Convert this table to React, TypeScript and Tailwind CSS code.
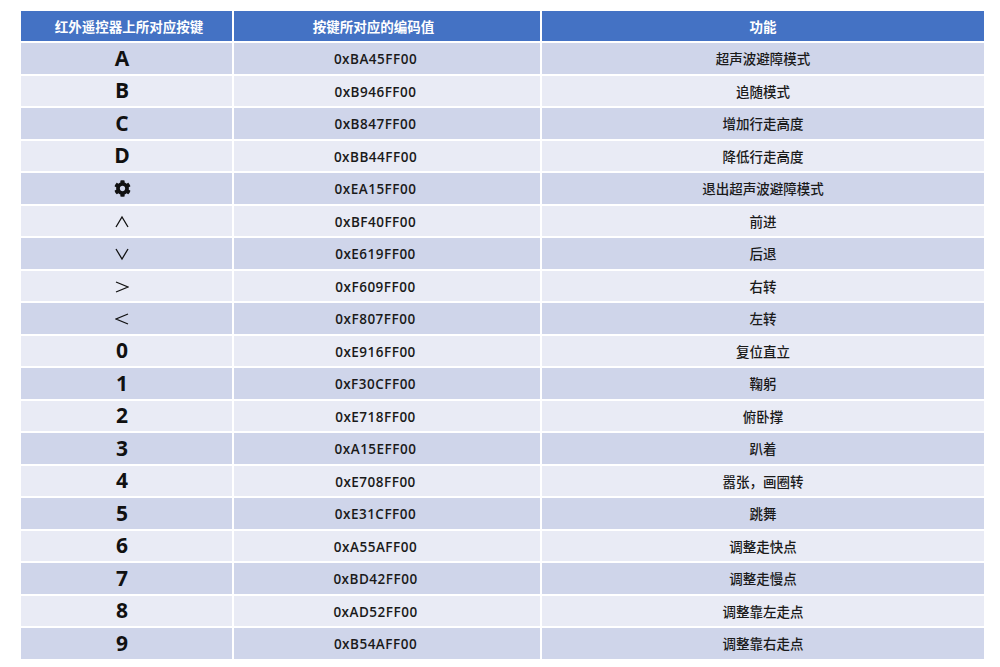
import { FaCog } from "react-icons/fa"

type Row = { key: string; code: string; fn: string }

const rows: Row[] = [
  { key: "A", code: "0xBA45FF00", fn: "超声波避障模式" },
  { key: "B", code: "0xB946FF00", fn: "追随模式" },
  { key: "C", code: "0xB847FF00", fn: "增加行走高度" },
  { key: "D", code: "0xBB44FF00", fn: "降低行走高度" },
  { key: "gear", code: "0xEA15FF00", fn: "退出超声波避障模式" },
  { key: "up", code: "0xBF40FF00", fn: "前进" },
  { key: "down", code: "0xE619FF00", fn: "后退" },
  { key: "right", code: "0xF609FF00", fn: "右转" },
  { key: "left", code: "0xF807FF00", fn: "左转" },
  { key: "0", code: "0xE916FF00", fn: "复位直立" },
  { key: "1", code: "0xF30CFF00", fn: "鞠躬" },
  { key: "2", code: "0xE718FF00", fn: "俯卧撑" },
  { key: "3", code: "0xA15EFF00", fn: "趴着" },
  { key: "4", code: "0xE708FF00", fn: "嚣张，画圈转" },
  { key: "5", code: "0xE31CFF00", fn: "跳舞" },
  { key: "6", code: "0xA55AFF00", fn: "调整走快点" },
  { key: "7", code: "0xBD42FF00", fn: "调整走慢点" },
  { key: "8", code: "0xAD52FF00", fn: "调整靠左走点" },
  { key: "9", code: "0xB54AFF00", fn: "调整靠右走点" },
]

const arrowPaths: Record<string, string> = {
  up: "M1 12 L7 2 L13 12",
  down: "M1 2 L7 12 L13 2",
  right: "M1 2 L13 7 L1 12",
  left: "M13 2 L1 7 L13 12",
}

const KeyCell = ({ k }: { k: string }) => {
  if (k === "gear") return <FaCog className="h-[17px] w-[17px] text-[#111]" />
  if (arrowPaths[k])
    return (
      <svg width="14" height="14" viewBox="0 0 14 14" className="mt-[2px]">
        <path d={arrowPaths[k]} fill="none" stroke="#111" strokeWidth="1.3" />
      </svg>
    )
  return <span className="text-[21px] font-bold leading-none text-[#111]">{k}</span>
}

export default function App() {
  return (
    <div className="min-h-[667px] w-[1000px] bg-white pl-[21px] pt-[11px] [font-family:'Open_Sans','Noto_Sans_CJK_SC',sans-serif]">
      <div className="grid w-[963px] grid-cols-[211px_306px_442px] gap-[2px]">
        <div className="flex h-[30px] items-center justify-center bg-[#4472c4] pl-[5px] text-[13.5px] font-bold text-white [font-family:'Noto_Sans_CJK_SC',sans-serif]">
          红外遥控器上所对应按键
        </div>
        <div className="flex h-[30px] items-center justify-center bg-[#4472c4] pr-[27px] text-[13.5px] font-bold text-white [font-family:'Noto_Sans_CJK_SC',sans-serif]">
          按键所对应的编码值
        </div>
        <div className="flex h-[30px] items-center justify-center bg-[#4472c4] text-[13.5px] font-bold text-white [font-family:'Noto_Sans_CJK_SC',sans-serif]">
          功能
        </div>
        {rows.map((r, i) => {
          const bg = i % 2 === 0 ? "bg-[#cfd5ea]" : "bg-[#e9ebf5]"
          return [
            <div key={r.code + "k"} className={`flex h-[30.5px] items-center justify-center pr-[9px] ${bg}`}>
              <KeyCell k={r.key} />
            </div>,
            <div
              key={r.code + "c"}
              className={`flex h-[30.5px] items-center justify-center pr-[23px] pt-[2px] text-[13.5px] font-semibold tracking-[0.5px] text-[#1a1a1a] ${bg}`}
            >
              {r.code}
            </div>,
            <div
              key={r.code + "f"}
              className={`flex h-[30.5px] items-center justify-center text-[13.5px] font-medium text-[#1a1a1a] [font-family:'Noto_Sans_CJK_SC',sans-serif] ${bg}`}
            >
              {r.fn}
            </div>,
          ]
        })}
      </div>
    </div>
  )
}
